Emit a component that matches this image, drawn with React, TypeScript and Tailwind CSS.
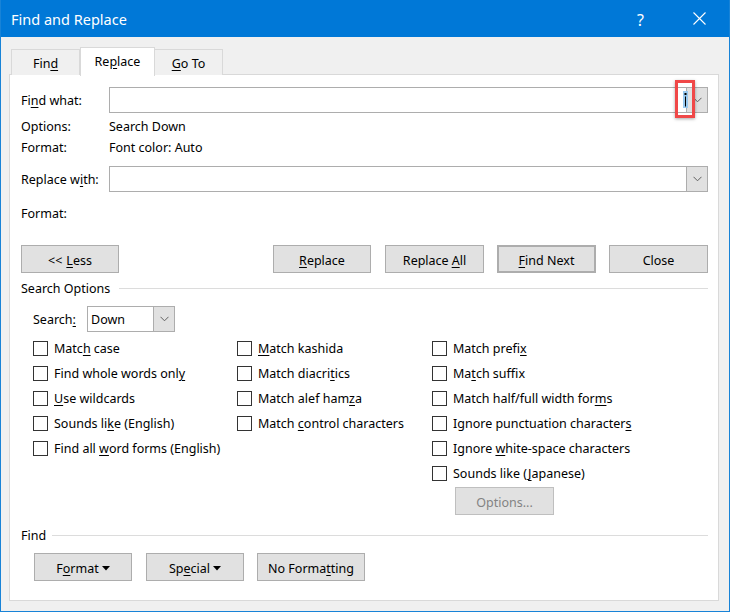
import React from "react";

const U = ({ children }: { children: React.ReactNode }) => (
  <span className="underline underline-offset-[2px] decoration-1">{children}</span>
);

const Chevron = () => (
  <svg width="9" height="6" viewBox="0 0 9 6" className="block">
    <path d="M0.5 0.8 L4.5 4.8 L8.5 0.8" fill="none" stroke="#606060" strokeWidth="1" />
  </svg>
);

const Btn = ({
  children,
  w,
  extra = "",
}: {
  children: React.ReactNode;
  w: string;
  extra?: string;
}) => (
  <div className={`${w} h-[28px] flex items-center justify-center pt-[4px] bg-[#e1e1e1] border border-[#adadad] text-black ${extra}`}>
    {children}
  </div>
);

const Check = ({ children }: { children: React.ReactNode }) => (
  <div className="h-[25px] flex items-center">
    <div className="w-[15px] h-[15px] border border-[#333333] bg-white shrink-0" />
    <div className="ml-[6px] pt-[2px] whitespace-nowrap">{children}</div>
  </div>
);

const Triangle = () => (
  <svg width="8" height="5" viewBox="0 0 8 5" className="ml-[3px] -mt-[2px]">
    <path d="M0 0 L8 0 L4 4.5 Z" fill="#000" />
  </svg>
);

export default function App() {
  return (
    <div className="w-[730px] h-[612px] bg-[#f0f0f0] border-x border-b border-[#1883d7] flex flex-col font-['Segoe_UI','Noto_Sans',sans-serif] text-[12.5px] text-black leading-none overflow-hidden">
      {/* Title bar */}
      <div className="h-[37px] bg-[#0078d7] flex items-center text-white -mx-px">
        <div className="ml-[11px] pt-[2px] text-[14.5px]">Find and Replace</div>
        <div className="ml-auto w-[13px] pt-[2px] text-[16px] mr-[46px] text-center">?</div>
        <svg width="13" height="13" viewBox="0 0 13 13" className="mr-[24px]">
          <path d="M0.5 0.5 L12.5 12.5 M12.5 0.5 L0.5 12.5" stroke="#fff" strokeWidth="1.1" />
        </svg>
      </div>

      {/* Tabs */}
      <div className="mt-[10px] ml-[10px] flex items-end h-[28px] relative z-10">
        <div className="w-[69px] h-[26px] pt-[4px] border border-b-0 border-[#d9d9d9] bg-[#f0f0f0] flex items-center justify-center">
          Fin<U>d</U>
        </div>
        <div className="w-[75px] h-[29px] pt-[1px] border border-b-0 border-[#d9d9d9] bg-white flex items-center justify-center -mb-px">
          Re<U>p</U>lace
        </div>
        <div className="w-[68px] h-[26px] pt-[4px] border border-b-0 border-l-0 border-[#d9d9d9] bg-[#f0f0f0] flex items-center justify-center">
          <U>G</U>o To
        </div>
      </div>

      {/* Panel */}
      <div className="ml-[8px] w-[710px] h-[527px] -mt-px bg-white border border-[#d9d9d9] pl-[11px] pr-[10px] flex flex-col">
        {/* Find what */}
        <div className="mt-[12px] h-[26px] flex items-center">
          <div className="w-[88px] pt-[2px]">
            Fi<U>n</U>d what:
          </div>
          <div className="flex-1 h-[26px] border border-[#adadad] bg-white relative">
            <div className="absolute left-[565px] -top-[8px] w-[20px] h-[38px] border-[3px] border-[#f04848] shadow-[0_1px_3px_rgba(0,0,0,0.35)] flex items-center justify-center">
              <div className="w-[5px] h-[17px] bg-[#99c9ef] flex justify-center">
                <svg width="3" height="17" viewBox="0 0 3 17">
                  <rect x="0.5" y="2" width="2" height="2" fill="#000" />
                  <rect x="1" y="5.5" width="1" height="10" fill="#000" />
                </svg>
              </div>
            </div>
          </div>
          <div className="w-[21px] h-[26px] border border-l-0 border-[#adadad] bg-[#e1e1e1] flex items-center justify-center">
            <Chevron />
          </div>
        </div>

        <div className="mt-[3px] h-[20px] pt-[2px] flex items-center">
          <div className="w-[88px]">Options:</div>
          <div>Search Down</div>
        </div>
        <div className="mt-[1px] h-[20px] pt-[2px] flex items-center">
          <div className="w-[88px]">Format:</div>
          <div>Font color: Auto</div>
        </div>

        {/* Replace with */}
        <div className="mt-[9px] h-[26px] flex items-center">
          <div className="w-[88px] pt-[2px]">
            Replace w<U>i</U>th:
          </div>
          <div className="flex-1 h-[26px] border border-[#adadad] bg-white" />
          <div className="w-[21px] h-[26px] border border-l-0 border-[#adadad] bg-[#e1e1e1] flex items-center justify-center">
            <Chevron />
          </div>
        </div>

        <div className="mt-[11px] h-[20px] pt-[2px] flex items-center">
          <div className="w-[88px]">Format:</div>
        </div>

        {/* Buttons */}
        <div className="mt-[22px] flex items-center">
          <Btn w="w-[98px]">
            &lt;&lt; <span className="ml-[4px]"><U>L</U>ess</span>
          </Btn>
          <div className="ml-auto flex">
            <Btn w="w-[98px]">
              <U>R</U>eplace
            </Btn>
            <Btn w="w-[99px]" extra="ml-[14px]">
              Replace <span className="ml-[3px]"><U>A</U>ll</span>
            </Btn>
            <Btn w="w-[99px]" extra="ml-[13px] border-2 border-[#0078d7]">
              <U>F</U>ind Next
            </Btn>
            <Btn w="w-[99px]" extra="ml-[13px]">
              Close
            </Btn>
          </div>
        </div>

        {/* Search Options */}
        <div className="mt-[5px] h-[20px] flex items-center">
          <div className="pt-[2px]">Search Options</div>
          <div className="flex-1 h-px bg-[#dcdcdc] ml-[9px]" />
        </div>

        <div className="mt-[8px] h-[26px] flex items-center pl-[12px]">
          <div className="w-[54px] pt-[2px]">
            Search<U>:</U>
          </div>
          <div className="w-[67px] h-[26px] border border-[#adadad] bg-white flex items-center pl-[3px] pt-[2px]">
            Down
          </div>
          <div className="w-[21px] h-[26px] border border-l-0 border-[#adadad] bg-[#e1e1e1] flex items-center justify-center">
            <Chevron />
          </div>
        </div>

        <div className="mt-[4px] flex pl-[12px]">
          <div className="w-[204px] flex flex-col">
            <Check>Matc<U>h</U> case</Check>
            <Check>Find whole words onl<U>y</U></Check>
            <Check><U>U</U>se wildcards</Check>
            <Check>Sounds li<U>k</U>e (English)</Check>
            <Check>Find all <U>w</U>ord forms (English)</Check>
          </div>
          <div className="w-[195px] flex flex-col">
            <Check><U>M</U>atch kashida</Check>
            <Check>Match diacri<U>t</U>ics</Check>
            <Check>Match alef ham<U>z</U>a</Check>
            <Check>Match <U>c</U>ontrol characters</Check>
          </div>
          <div className="flex flex-col">
            <Check>Match prefi<U>x</U></Check>
            <Check>Ma<U>t</U>ch suffix</Check>
            <Check>Match half/full width for<U>m</U>s</Check>
            <Check>Ignore punctuation character<U>s</U></Check>
            <Check>Ignore <U>w</U>hite-space characters</Check>
            <Check>Sounds like (<U>J</U>apanese)</Check>
            <div className="mt-[1px] ml-[23px] w-[99px] h-[28px] pt-[4px] flex items-center justify-center bg-[#e1e1e1] border border-[#bfbfbf] text-[#838383]">
              Options...
            </div>
          </div>
        </div>

        {/* Find */}
        <div className="mt-[10px] h-[20px] flex items-center">
          <div className="pt-[2px]">Find</div>
          <div className="flex-1 h-px bg-[#dcdcdc] ml-[6px]" />
        </div>
        <div className="mt-[8px] flex pl-[13px]">
          <Btn w="w-[98px]">
            F<U>o</U>rmat<Triangle />
          </Btn>
          <Btn w="w-[98px]" extra="ml-[14px]">
            Sp<U>e</U>cial<Triangle />
          </Btn>
          <Btn w="w-[108px]" extra="ml-[13px]">
            No Forma<U>t</U>ting
          </Btn>
        </div>
      </div>
    </div>
  );
}
